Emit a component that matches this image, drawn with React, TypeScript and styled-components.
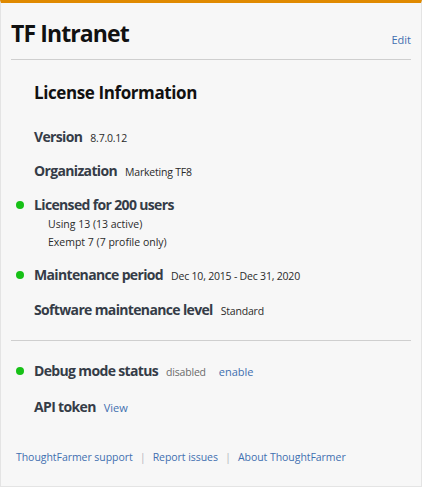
import React from "react";
import styled, { createGlobalStyle } from "styled-components";

const Global = createGlobalStyle`
  html, body { margin: 0; padding: 0; background: #f7f7f7; }
  body { font-family: "Open Sans", "Noto Sans", sans-serif; }
`;

const Panel = styled.div`
  box-sizing: border-box;
  width: 422px;
  height: 487px;
  background: #f7f7f7;
  border: 1px solid #e4e4e4;
  border-top: 3px solid #e08a00;
  display: flex;
  flex-direction: column;
`;

const Header = styled.div`
  display: flex;
  justify-content: space-between;
  align-items: flex-end;
  padding: 10px 10px 0 10px;
  height: 35px;
`;

const Title = styled.h1`
  margin: 0;
  font-size: 23px;
  line-height: 30px;
  font-weight: 700;
  color: #111;
  letter-spacing: -0.9px;
`;

const Link = styled.a<{ $size?: number }>`
  color: #3f6fb0;
  text-decoration: none;
  font-size: ${(p) => p.$size ?? 11}px;
  cursor: pointer;
`;

const EditLink = styled(Link)`
  margin-bottom: 1px;
`;

const Rule = styled.hr<{ $top: number; $bottom: number }>`
  border: 0;
  border-top: 1px solid #cfcfcf;
  margin: ${(p) => `${p.$top}px 10px ${p.$bottom}px 10px`};
`;

const Section = styled.div`
  display: flex;
  flex-direction: column;
  padding-left: 33px;
`;

const Heading = styled.h2`
  margin: 0 0 22px 0;
  font-size: 17px;
  line-height: 24px;
  font-weight: 700;
  color: #111;
  letter-spacing: -0.4px;
`;

const Item = styled.div<{ $mb: number }>`
  position: relative;
  margin-bottom: ${(p) => p.$mb}px;
`;

const Row = styled.div`
  display: flex;
  align-items: baseline;
  gap: 8px;
  height: 20px;
  line-height: 20px;
`;

const Label = styled.span`
  font-size: 14px;
  font-weight: 700;
  color: #353c47;
  letter-spacing: -0.65px;
`;

const Value = styled.span<{ $muted?: boolean }>`
  font-size: 10.5px;
  letter-spacing: -0.2px;
  color: ${(p) => (p.$muted ? "#6b6b6b" : "#2a2a2a")};
`;

const Sub = styled.div`
  font-size: 10.5px;
  line-height: 18px;
  height: 18px;
  color: #2a2a2a;
  padding-left: 14px;
`;

const Dot = styled.span`
  position: absolute;
  left: -18px;
  top: 6px;
  width: 8px;
  height: 8px;
  border-radius: 50%;
  background: #17c117;
`;

const EnableLink = styled(Link)`
  margin-left: 5px;
`;

const Footer = styled.div`
  display: flex;
  align-items: center;
  gap: 7px;
  padding: 0 0 0 15px;
  margin-top: 32px;
  line-height: 16px;
`;

const FooterLink = styled(Link)`
  font-size: 10.5px;
  letter-spacing: -0.05px;
`;

const Sep = styled.span`
  color: #b4b6c0;
  font-size: 11px;
`;

export default function App() {
  return (
    <>
      <Global />
      <Panel>
        <Header>
          <Title>TF Intranet</Title>
          <EditLink>Edit</EditLink>
        </Header>
        <Rule $top={11} $bottom={21} />
        <Section>
          <Heading>License Information</Heading>
          <Item $mb={14}>
            <Row>
              <Label>Version</Label>
              <Value>8.7.0.12</Value>
            </Row>
          </Item>
          <Item $mb={14}>
            <Row>
              <Label>Organization</Label>
              <Value>Marketing TF8</Value>
            </Row>
          </Item>
          <Item $mb={14}>
            <Dot />
            <Row>
              <Label>Licensed for 200 users</Label>
            </Row>
            <Sub>Using 13 (13 active)</Sub>
            <Sub>Exempt 7 (7 profile only)</Sub>
          </Item>
          <Item $mb={15}>
            <Dot />
            <Row>
              <Label>Maintenance period</Label>
              <Value>Dec 10, 2015 - Dec 31, 2020</Value>
            </Row>
          </Item>
          <Item $mb={0}>
            <Row>
              <Label>Software maintenance level</Label>
              <Value>Standard</Value>
            </Row>
          </Item>
        </Section>
        <Rule $top={20} $bottom={20} />
        <Section>
          <Item $mb={16}>
            <Dot />
            <Row>
              <Label>Debug mode status</Label>
              <Value $muted>disabled</Value>
              <EnableLink $size={11}>enable</EnableLink>
            </Row>
          </Item>
          <Item $mb={0}>
            <Row>
              <Label>API token</Label>
              <Link $size={11}>View</Link>
            </Row>
          </Item>
        </Section>
        <Footer>
          <FooterLink>ThoughtFarmer support</FooterLink>
          <Sep>|</Sep>
          <FooterLink>Report issues</FooterLink>
          <Sep>|</Sep>
          <FooterLink>About ThoughtFarmer</FooterLink>
        </Footer>
      </Panel>
    </>
  );
}
